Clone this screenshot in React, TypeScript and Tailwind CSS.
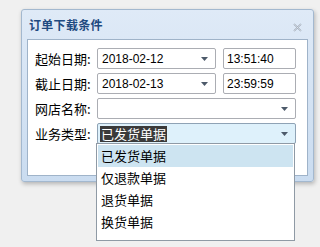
import React from "react"

const font = { fontFamily: '"Noto Sans CJK SC", "Liberation Sans", sans-serif' }
const latin = { fontFamily: '"Liberation Sans", sans-serif' }

function Arrow() {
  return (
    <svg width="7" height="4" viewBox="0 0 7 4" className="shrink-0">
      <path d="M0 0h7L3.5 4z" fill="#4d5a6a" />
    </svg>
  )
}

function Label({ text }: { text: string }) {
  return <div className="w-[62px] shrink-0 text-[13px] leading-none text-black">{text}</div>
}

export default function App() {
  const items = ["已发货单据", "仅退款单据", "退货单据", "换货单据"]
  return (
    <div className="relative w-[320px] h-[247px] bg-[#f0f0f0] pt-[9px] pl-[21px]" style={font}>
      {/* window */}
      <div className="w-[293px] h-[173px] rounded-[3px] border border-[#a3b8cf] bg-gradient-to-b from-[#dfeaf7] to-[#cadcf0] px-[5px] shadow-[1px_2px_4px_rgba(0,0,0,0.25)]">
        <div className="h-[29px] flex items-center justify-between pl-[2px] pr-[6px]">
          <span className="text-[12px] font-bold text-[#1f4a80] tracking-[0.3px]">订单下载条件</span>
          <svg width="9" height="9" viewBox="0 0 9 9" className="mt-[6px]">
            <path d="M1 1l7 7M8 1l-7 7" stroke="#9aa5b3" strokeWidth="1.6" fill="none" />
            <path d="M1 1l7 7M8 1l-7 7" stroke="#f4f7fb" strokeWidth="0.5" fill="none" />
          </svg>
        </div>
        <div className="h-[137px] bg-white border border-[#9fb3c9] pt-[8px] pl-[7px] flex flex-col gap-[4px]">
          {/* row 1 */}
          <div className="flex items-center h-[21px]">
            <Label text="起始日期:" />
            <div className="w-[119px] h-[21px] border border-[#abadb3] rounded-[2px] flex items-center justify-between pl-[4px] pr-[7px] text-[12px]" style={latin}>
              <span>2018-02-12</span>
              <Arrow />
            </div>
            <div className="ml-[7px] w-[73px] h-[21px] border border-[#abadb3] rounded-[2px] flex items-center pl-[3px] text-[12px]" style={latin}>
              13:51:40
            </div>
          </div>
          {/* row 2 */}
          <div className="flex items-center h-[21px]">
            <Label text="截止日期:" />
            <div className="w-[119px] h-[21px] border border-[#abadb3] rounded-[2px] flex items-center justify-between pl-[4px] pr-[7px] text-[12px]" style={latin}>
              <span>2018-02-13</span>
              <Arrow />
            </div>
            <div className="ml-[7px] w-[73px] h-[21px] border border-[#abadb3] rounded-[2px] flex items-center pl-[3px] text-[12px]" style={latin}>
              23:59:59
            </div>
          </div>
          {/* row 3 */}
          <div className="flex items-center h-[21px]">
            <Label text="网店名称:" />
            <div className="w-[199px] h-[21px] border border-[#abadb3] rounded-[2px] flex items-center justify-end pr-[7px]">
              <Arrow />
            </div>
          </div>
          {/* row 4 */}
          <div className="flex items-center h-[21px]">
            <Label text="业务类型:" />
            <div className="w-[199px] h-[21px] border border-[#8fa3b5] rounded-[2px] bg-[#def1fb] flex items-center justify-between pl-[2px] pr-[7px]">
              <span className="bg-[#3a3a3a] text-white text-[13px] leading-[16px] px-[1px]">已发货单据</span>
              <Arrow />
            </div>
          </div>
        </div>
      </div>

      {/* dropdown list */}
      <div className="absolute left-[96px] top-[143px] w-[199px] h-[98px] bg-white border border-[#8f9aa5] pt-[1px] px-[1px]">
        {items.map((it, i) => (
          <div
            key={it}
            className={`h-[22px] flex items-center pl-[3px] text-[13px] text-black ${i === 0 ? "bg-[#cde4f1]" : ""}`}
          >
            {it}
          </div>
        ))}
      </div>
    </div>
  )
}
